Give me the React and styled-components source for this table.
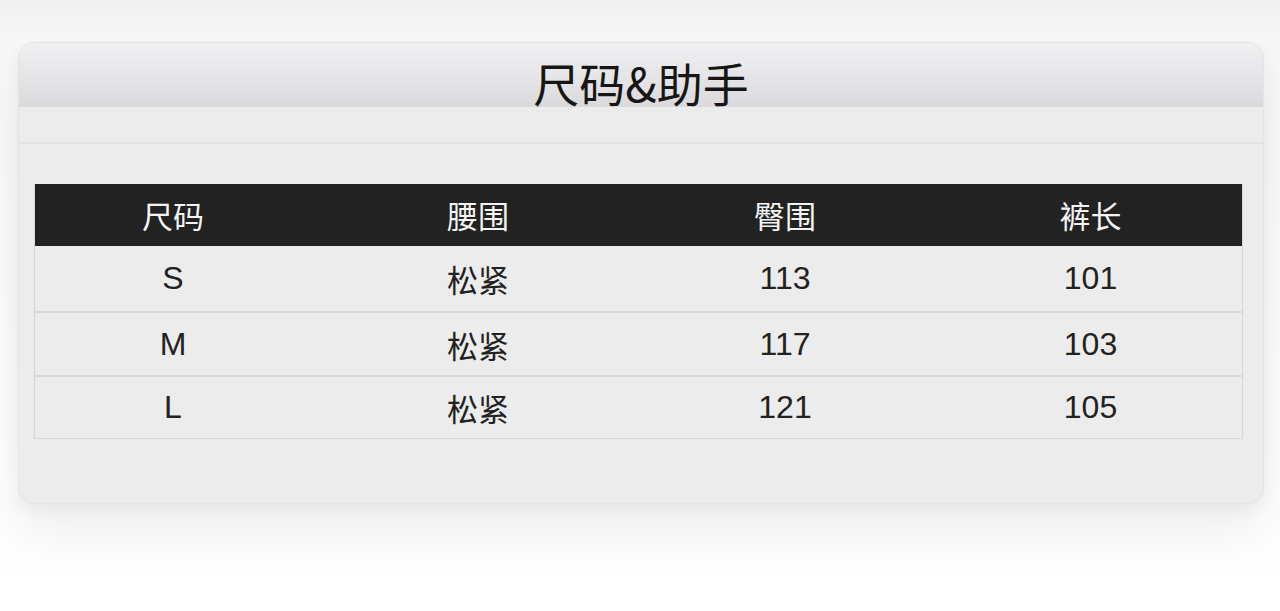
import React from "react";
import styled, { createGlobalStyle } from "styled-components";

const Global = createGlobalStyle`
  html, body { margin: 0; padding: 0; background: #fbfbfb; }
  body { font-family: "Liberation Sans", "Noto Sans CJK SC", sans-serif; }
`;

const Page = styled.div`
  width: 1280px;
  height: 611px;
  box-sizing: border-box;
  padding: 42px 16px 0 18px;
  background: linear-gradient(#f0f0f0 0px, #f7f7f7 40px, #fbfbfb 300px, #ffffff 611px);
  overflow: hidden;
`;

const Card = styled.div`
  height: 462px;
  border-radius: 16px;
  background: #ececec;
  border: 1px solid #e4e4e4;
  box-sizing: border-box;
  box-shadow: 0 30px 50px rgba(0, 0, 0, 0.06), 0 6px 16px rgba(0, 0, 0, 0.05);
  display: flex;
  flex-direction: column;
  overflow: hidden;
`;

const TitleBar = styled.div`
  height: 64px;
  background: linear-gradient(#f0eff1, #e6e5e7 50%, #dbd9dc);
  display: flex;
  justify-content: center;
  align-items: flex-end;
`;

const Title = styled.h1`
  margin: 0;
  font-family: "Noto Sans CJK SC", sans-serif;
  font-weight: 400;
  font-size: 46px;
  line-height: 46px;
  color: #161616;
  transform: translateY(-2px);
`;

const SubBar = styled.div`
  height: 35px;
  border-bottom: 2px solid #e2e2e2;
  background: #ececec;
`;

const Body = styled.div`
  padding: 40px 20px 0 15px;
`;

const Table = styled.div`
  display: grid;
  grid-template-columns: 276px 334px 280px 1fr;
  border: 1px solid #d7d7d7;
  border-top: none;
`;

const HeadCell = styled.div`
  height: 62px;
  background: #222222;
  color: #f4f4f4;
  font-family: "Noto Sans CJK SC", sans-serif;
  font-size: 31px;
  display: flex;
  align-items: center;
  justify-content: center;
  padding-bottom: 2px;
  padding-left: ${(p) => p.$shift || 0}px;
  box-sizing: border-box;
`;

const Cell = styled.div`
  height: ${(p) => p.$h}px;
  border-top: ${(p) => (p.$first ? "none" : "2px solid #d9d9d9")};
  box-sizing: border-box;
  color: #222222;
  font-family: ${(p) => (p.$cjk ? '"Noto Sans CJK SC", sans-serif' : '"Liberation Sans", sans-serif')};
  font-size: ${(p) => (p.$cjk ? 31 : 32)}px;
  display: flex;
  align-items: center;
  justify-content: center;
  padding-left: ${(p) => p.$shift || 0}px;
`;

const headers = ["尺码", "腰围", "臀围", "裤长"];
const shifts = [0, 0, 0, 14];
const rows = [
  ["S", "松紧", "113", "101", 65],
  ["M", "松紧", "117", "103", 64],
  ["L", "松紧", "121", "105", 63],
];

export default function App() {
  return (
    <>
      <Global />
      <Page>
        <Card>
          <TitleBar>
            <Title>尺码&amp;助手</Title>
          </TitleBar>
          <SubBar />
          <Body>
            <Table>
              {headers.map((h, j) => (
                <HeadCell key={h} $shift={shifts[j]}>
                  {h}
                </HeadCell>
              ))}
              {rows.map((r, i) =>
                r.slice(0, 4).map((v, j) => (
                  <Cell
                    key={`${i}-${j}`}
                    $h={r[4]}
                    $first={i === 0}
                    $cjk={j === 1}
                    $shift={shifts[j]}
                  >
                    {v}
                  </Cell>
                ))
              )}
            </Table>
          </Body>
        </Card>
      </Page>
    </>
  );
}
